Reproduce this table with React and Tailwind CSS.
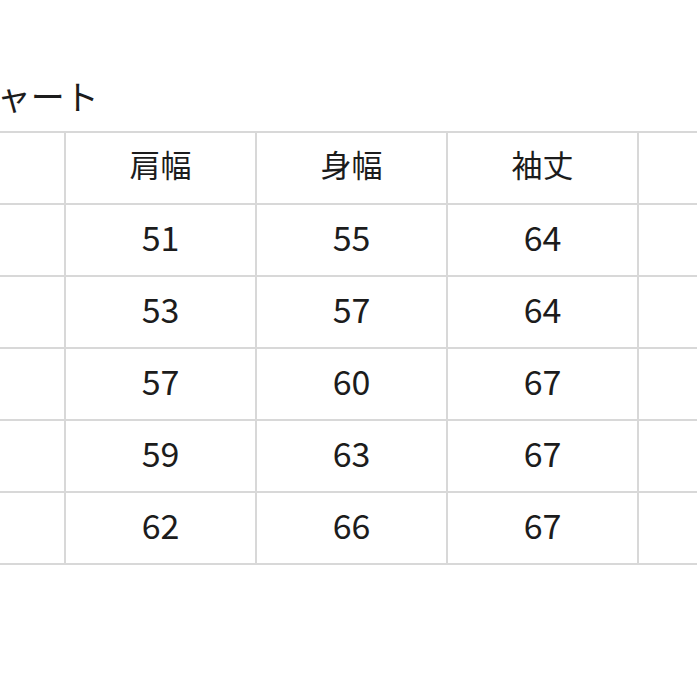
import React from "react";

const headers = ["", "肩幅", "身幅", "袖丈", "着丈"];

const rows = [
  ["S", "51", "55", "64", "70"],
  ["M", "53", "57", "64", "72"],
  ["L", "57", "60", "67", "74"],
  ["XL", "59", "63", "67", "76"],
  ["XXL", "62", "66", "67", "78"],
];

const cellClass =
  "flex h-[70px] items-center justify-center bg-white pb-[7px] text-[#1c1c1c]";

export default function App() {
  return (
    <div
      className="h-[697px] w-[697px] overflow-hidden bg-white"
      style={{ fontFamily: '"Noto Sans CJK JP", "Noto Sans", sans-serif' }}
    >
      <div className="ml-[-127px] w-[960px] pt-[76px]">
        <p className="ml-[-11px] text-[34px] leading-[40px] text-[#1c1c1c]">
          サイズチャート
        </p>

        <div className="mt-[15px] grid grid-cols-[189px_189px_189px_189px_189px] gap-[2px] bg-[#d8d8d8] p-[2px]">
          {headers.map((label, index) => (
            <div key={index} className={`${cellClass} text-[31px]`}>
              {label}
            </div>
          ))}
          {rows.map((row) =>
            row.map((value, index) => (
              <div
                key={`${row[0]}-${index}`}
                className={`${cellClass} text-[34px]`}
              >
                {value}
              </div>
            )),
          )}
        </div>
      </div>
    </div>
  );
}
